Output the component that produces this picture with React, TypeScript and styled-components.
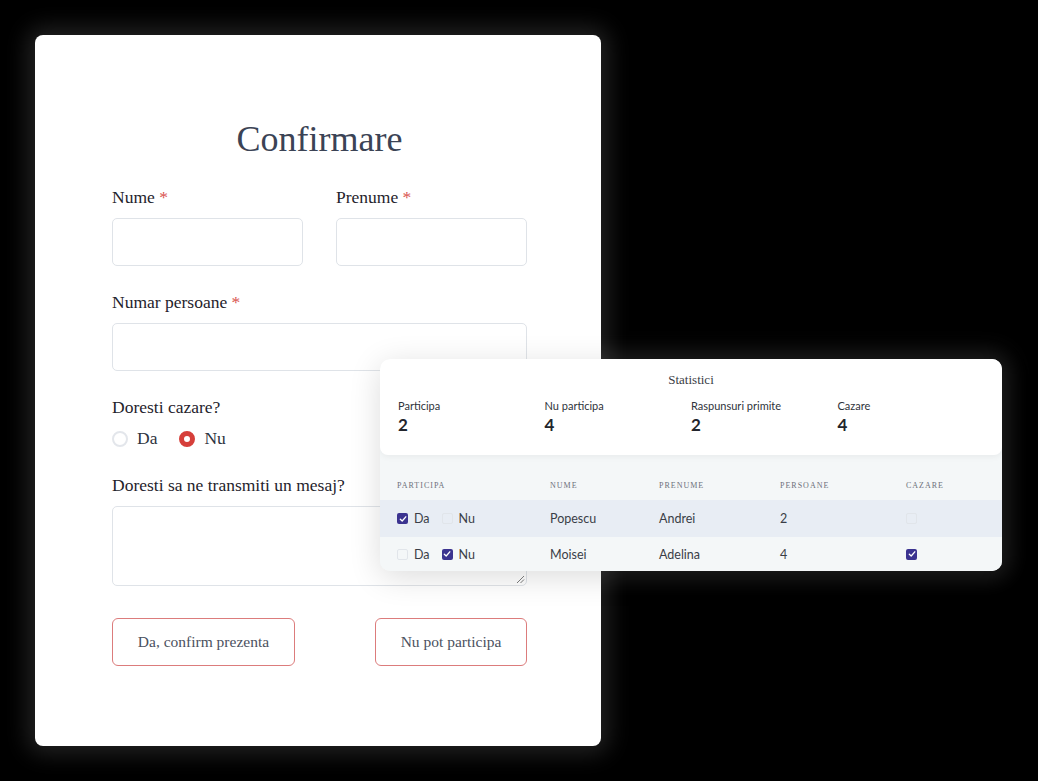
import React from "react";
import styled, { createGlobalStyle } from "styled-components";

const Global = createGlobalStyle`
  html, body { margin: 0; padding: 0; background: #000; }
  * { box-sizing: border-box; }
`;

const serif = `"Liberation Serif", "DejaVu Serif", serif`;
const sans = `"Lato", "Noto Sans", sans-serif`;

const Canvas = styled.div`
  position: relative;
  width: 1038px;
  height: 781px;
  background: #000;
  padding: 35px 0 0 35px;
  overflow: hidden;
`;

const FormCard = styled.div`
  width: 566px;
  height: 711px;
  background: #fff;
  border-radius: 8px;
  padding: 84px 74px 0 77px;
  box-shadow: 0 0 22px 8px rgba(255, 255, 255, 0.13);
  font-family: ${serif};
  display: flex;
  flex-direction: column;
`;

const Title = styled.h1`
  margin: 0 0 27px;
  text-align: center;
  font-family: ${serif};
  font-weight: 400;
  font-size: 36px;
  line-height: 40px;
  color: #3b4355;
`;

const Row = styled.div`
  display: grid;
  grid-template-columns: 191px 191px;
  column-gap: 33px;
`;

const Field = styled.div<{ $mb?: number }>`
  display: flex;
  flex-direction: column;
  margin-bottom: ${(p) => p.$mb ?? 0}px;
`;

const Label = styled.label`
  font-size: 17.5px;
  line-height: 22px;
  color: #1f232c;
  margin-bottom: 10px;
`;

const Star = styled.span`
  color: #d9534f;
`;

const Input = styled.div`
  height: 48px;
  border: 1px solid #dfe3e8;
  border-radius: 5px;
  background: #fff;
`;

const TextArea = styled.div`
  position: relative;
  height: 80px;
  border: 1px solid #dfe3e8;
  border-radius: 5px;
`;

const Grip = styled.svg`
  position: absolute;
  right: 1px;
  bottom: 1px;
`;

const Radios = styled.div`
  display: flex;
  align-items: center;
`;

const RadioItem = styled.div`
  display: flex;
  align-items: center;
  gap: 9px;
  margin-right: 22px;
  font-size: 17.5px;
  color: #2e3340;
`;

const RadioDot = styled.span<{ $on?: boolean }>`
  width: 16px;
  height: 16px;
  border-radius: 50%;
  border: ${(p) => (p.$on ? "5px solid #d63f3a" : "2px solid #e3e6eb")};
  background: #fff;
`;

const Buttons = styled.div`
  display: flex;
  justify-content: space-between;
  margin-top: 32px;
`;

const Button = styled.button<{ $w: number }>`
  width: ${(p) => p.$w}px;
  height: 48px;
  border: 1.5px solid #dc7c7c;
  border-radius: 6px;
  background: #fff;
  font-family: ${serif};
  font-size: 15.5px;
  color: #4b5160;
  padding: 0;
`;

const StatsCard = styled.div`
  position: absolute;
  left: 380px;
  top: 359px;
  width: 622px;
  height: 212px;
  border-radius: 10px;
  overflow: hidden;
  background: #f4f7f8;
  box-shadow: 0 6px 32px rgba(0, 0, 0, 0.14), 0 0 22px 8px rgba(255, 255, 255, 0.12);
  display: flex;
  flex-direction: column;
`;

const StatsTop = styled.div`
  height: 96px;
  background: #fff;
  border-radius: 0 0 8px 8px;
  box-shadow: 0 2px 6px rgba(0, 0, 0, 0.05);
  padding: 13px 18px 0;
  position: relative;
  z-index: 1;
`;

const StatsTitle = styled.div`
  text-align: center;
  font-family: ${serif};
  font-size: 13px;
  line-height: 16px;
  color: #3a3d45;
  margin-bottom: 11px;
`;

const StatsGrid = styled.div`
  display: grid;
  grid-template-columns: repeat(4, 1fr);
`;

const Stat = styled.div`
  display: flex;
  flex-direction: column;
  font-family: ${sans};
`;

const StatLabel = styled.span`
  font-size: 11px;
  line-height: 14px;
  color: #2f333b;
`;

const StatValue = styled.span`
  font-size: 17px;
  line-height: 22px;
  font-weight: 700;
  color: #22252c;
  margin-top: 1px;
`;

const cols = "153px 109px 121px 126px 1fr";

const HeadRow = styled.div`
  display: grid;
  grid-template-columns: ${cols};
  padding: 15px 0 0 17px;
  height: 45px;
  align-items: center;
  font-family: ${serif};
  font-size: 8px;
  letter-spacing: 1px;
  color: #6c707a;
  text-transform: uppercase;
`;

const BodyRow = styled.div<{ $bg: string; $h: number }>`
  display: grid;
  grid-template-columns: ${cols};
  padding-left: 17px;
  height: ${(p) => p.$h}px;
  align-items: center;
  background: ${(p) => p.$bg};
  font-family: ${sans};
  font-size: 12.5px;
  color: #3a3e47;
`;

const CheckPair = styled.div`
  display: flex;
  align-items: center;
`;

const CheckItem = styled.span`
  display: inline-flex;
  align-items: center;
  gap: 6px;
  margin-right: 12px;
`;

const Box = styled.span<{ $on?: boolean }>`
  width: 11px;
  height: 11px;
  border-radius: 2px;
  display: inline-flex;
  align-items: center;
  justify-content: center;
  background: ${(p) => (p.$on ? "#3b3390" : "transparent")};
  border: ${(p) => (p.$on ? "none" : "1px solid #e1e5ea")};
`;

const Check = () => (
  <svg width="8" height="8" viewBox="0 0 8 8">
    <path d="M1.3 4.2 L3.2 6 L6.8 1.8" fill="none" stroke="#fff" strokeWidth="1.3" strokeLinecap="round" strokeLinejoin="round" />
  </svg>
);

const CB = ({ on }: { on?: boolean }) => <Box $on={on}>{on && <Check />}</Box>;

export default function App() {
  return (
    <>
      <Global />
      <Canvas>
        <FormCard>
          <Title>Confirmare</Title>
          <Row>
            <Field $mb={25}>
              <Label>
                Nume <Star>*</Star>
              </Label>
              <Input />
            </Field>
            <Field $mb={25}>
              <Label>
                Prenume <Star>*</Star>
              </Label>
              <Input />
            </Field>
          </Row>
          <Field $mb={25}>
            <Label>
              Numar persoane <Star>*</Star>
            </Label>
            <Input />
          </Field>
          <Field $mb={25}>
            <Label>Doresti cazare?</Label>
            <Radios>
              <RadioItem>
                <RadioDot />
                Da
              </RadioItem>
              <RadioItem>
                <RadioDot $on />
                Nu
              </RadioItem>
            </Radios>
          </Field>
          <Field>
            <Label>Doresti sa ne transmiti un mesaj?</Label>
            <TextArea>
              <Grip width="10" height="10" viewBox="0 0 10 10">
                <path d="M9 2 L2 9 M9 5.5 L5.5 9" stroke="#777" strokeWidth="1" />
              </Grip>
            </TextArea>
          </Field>
          <Buttons>
            <Button $w={183}>Da, confirm prezenta</Button>
            <Button $w={152}>Nu pot participa</Button>
          </Buttons>
        </FormCard>
        <StatsCard>
          <StatsTop>
            <StatsTitle>Statistici</StatsTitle>
            <StatsGrid>
              <Stat>
                <StatLabel>Participa</StatLabel>
                <StatValue>2</StatValue>
              </Stat>
              <Stat>
                <StatLabel>Nu participa</StatLabel>
                <StatValue>4</StatValue>
              </Stat>
              <Stat>
                <StatLabel>Raspunsuri primite</StatLabel>
                <StatValue>2</StatValue>
              </Stat>
              <Stat>
                <StatLabel>Cazare</StatLabel>
                <StatValue>4</StatValue>
              </Stat>
            </StatsGrid>
          </StatsTop>
          <HeadRow>
            <span>Participa</span>
            <span>Nume</span>
            <span>Prenume</span>
            <span>Persoane</span>
            <span>Cazare</span>
          </HeadRow>
          <BodyRow $bg="#e8edf4" $h={37}>
            <CheckPair>
              <CheckItem>
                <CB on />
                Da
              </CheckItem>
              <CheckItem>
                <CB />
                Nu
              </CheckItem>
            </CheckPair>
            <span>Popescu</span>
            <span>Andrei</span>
            <span>2</span>
            <CheckPair>
              <CB />
            </CheckPair>
          </BodyRow>
          <BodyRow $bg="#f4f7f8" $h={34}>
            <CheckPair>
              <CheckItem>
                <CB />
                Da
              </CheckItem>
              <CheckItem>
                <CB on />
                Nu
              </CheckItem>
            </CheckPair>
            <span>Moisei</span>
            <span>Adelina</span>
            <span>4</span>
            <CheckPair>
              <CB on />
            </CheckPair>
          </BodyRow>
        </StatsCard>
      </Canvas>
    </>
  );
}
